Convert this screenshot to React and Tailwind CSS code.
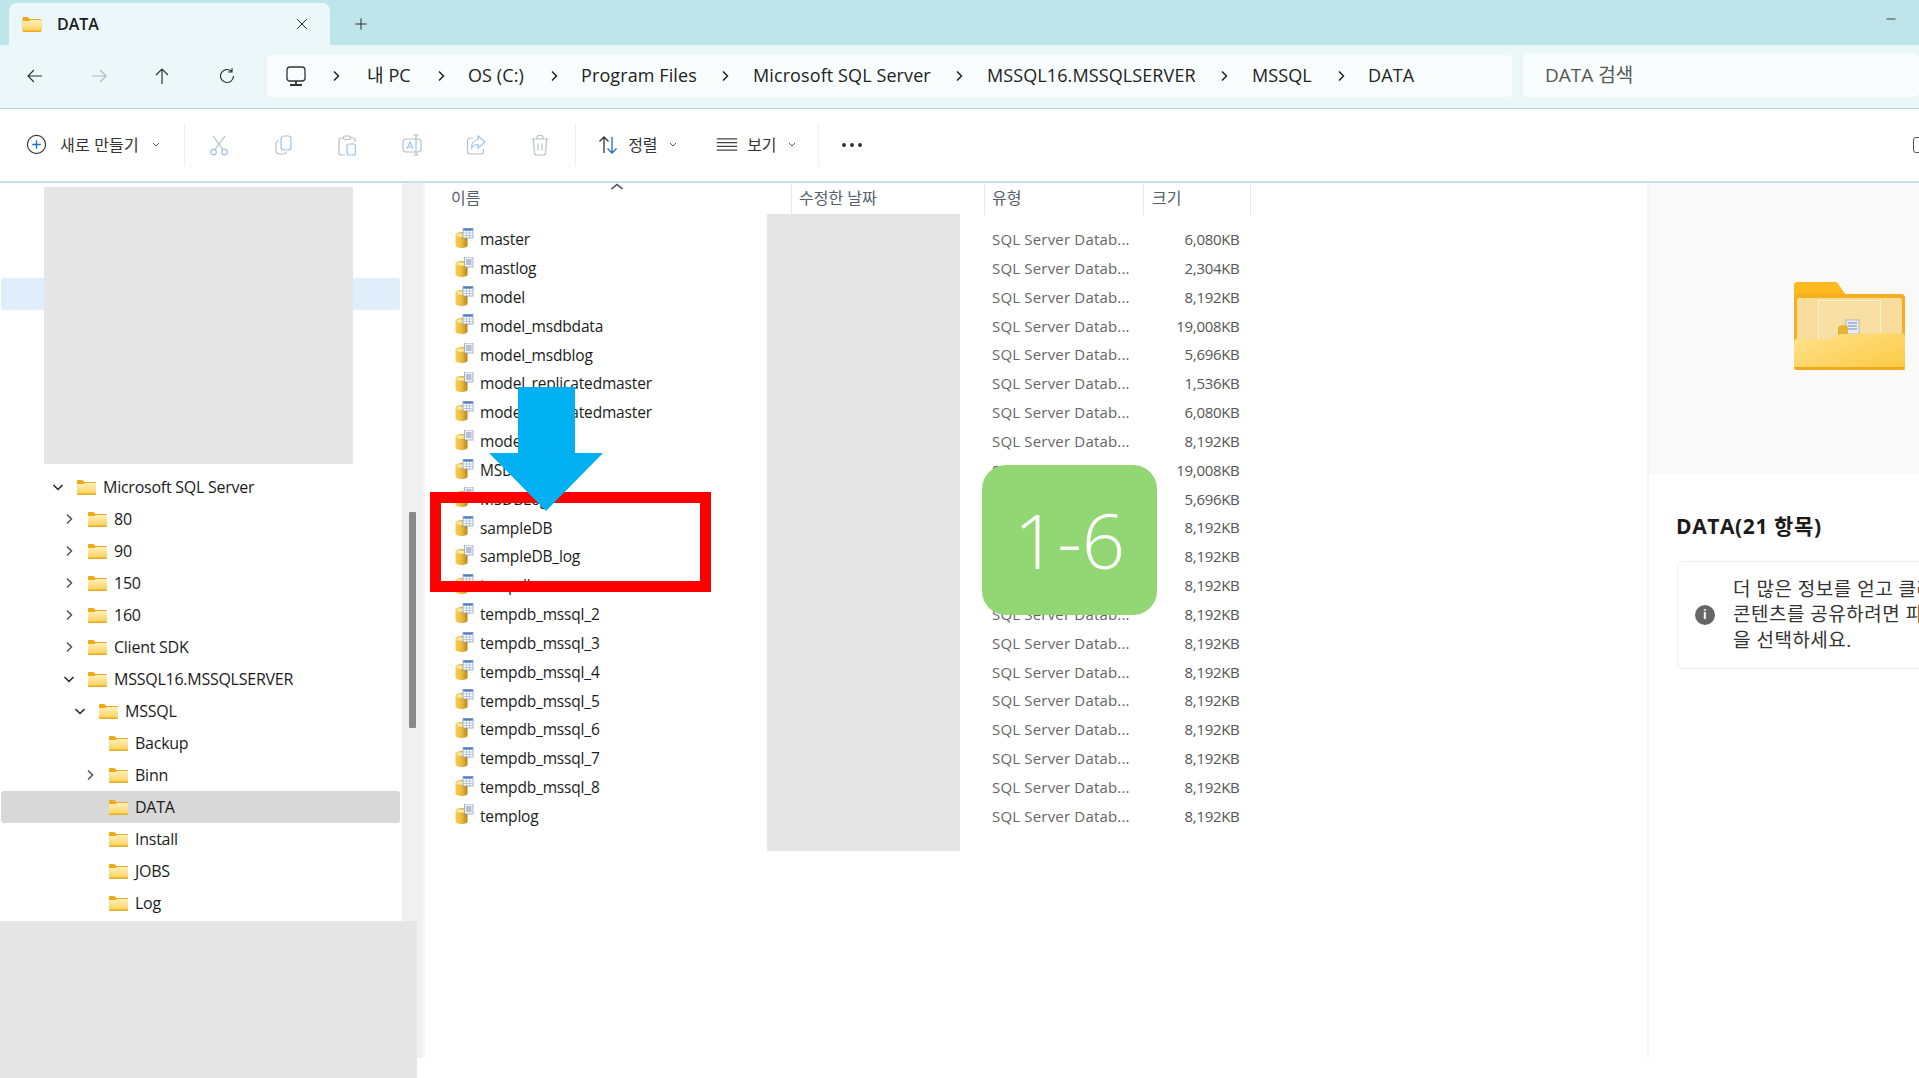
import { Minus, Plus, X } from "lucide-react";

const SANS = "[font-family:'Open_Sans','Noto_Sans_CJK_KR',sans-serif]";

const crumbs = [
  { label: "내 PC", cls: "w-[46px]", gap: "w-[55px]" },
  { label: "OS (C:)", cls: "w-[58px]", gap: "w-[55px]" },
  { label: "Program Files", cls: "w-[115px]", gap: "w-[57px]" },
  { label: "Microsoft SQL Server", cls: "w-[178px]", gap: "w-[56px]" },
  { label: "MSSQL16.MSSQLSERVER", cls: "w-[209px]", gap: "w-[56px]" },
  { label: "MSSQL", cls: "w-[61px]", gap: "w-[55px]" },
  { label: "DATA", cls: "w-[60px]", gap: "" },
];

const tree = [
  { name: "Microsoft SQL Server", indent: "pl-[51px]", arrow: "down" },
  { name: "80", indent: "pl-[62px]", arrow: "right" },
  { name: "90", indent: "pl-[62px]", arrow: "right" },
  { name: "150", indent: "pl-[62px]", arrow: "right" },
  { name: "160", indent: "pl-[62px]", arrow: "right" },
  { name: "Client SDK", indent: "pl-[62px]", arrow: "right" },
  { name: "MSSQL16.MSSQLSERVER", indent: "pl-[62px]", arrow: "down" },
  { name: "MSSQL", indent: "pl-[73px]", arrow: "down" },
  { name: "Backup", indent: "pl-[83px]" },
  { name: "Binn", indent: "pl-[83px]", arrow: "right" },
  { name: "DATA", indent: "pl-[83px]", selected: true },
  { name: "Install", indent: "pl-[83px]" },
  { name: "JOBS", indent: "pl-[83px]" },
  { name: "Log", indent: "pl-[83px]" },
];

const files = [
  ["master", "data", "6,080KB"],
  ["mastlog", "log", "2,304KB"],
  ["model", "data", "8,192KB"],
  ["model_msdbdata", "data", "19,008KB"],
  ["model_msdblog", "log", "5,696KB"],
  ["model_replicatedmaster", "log", "1,536KB"],
  ["model_replicatedmaster", "data", "6,080KB"],
  ["modellog", "log", "8,192KB"],
  ["MSDBData", "data", "19,008KB"],
  ["MSDBLog", "log", "5,696KB"],
  ["sampleDB", "data", "8,192KB"],
  ["sampleDB_log", "log", "8,192KB"],
  ["tempdb", "data", "8,192KB"],
  ["tempdb_mssql_2", "data", "8,192KB"],
  ["tempdb_mssql_3", "data", "8,192KB"],
  ["tempdb_mssql_4", "data", "8,192KB"],
  ["tempdb_mssql_5", "data", "8,192KB"],
  ["tempdb_mssql_6", "data", "8,192KB"],
  ["tempdb_mssql_7", "data", "8,192KB"],
  ["tempdb_mssql_8", "data", "8,192KB"],
  ["templog", "log", "8,192KB"],
];

const Folder = ({ className }) => (
  <svg viewBox="0 0 19 15" className={className}>
    <defs>
      <linearGradient id="folderFace" x1="0" y1="0" x2="0" y2="1">
        <stop offset="0" stopColor="#fff0bd" />
        <stop offset="1" stopColor="#fbd35f" />
      </linearGradient>
    </defs>
    <path d="M0 1a1 1 0 0 1 1-1h4.500l1.800 2H18a1 1 0 0 1 1 1v11a1 1 0 0 1-1 1H1a1 1 0 0 1-1-1z" fill="#eeaa1e" />
    <path d="M0 4l6.500 0 1.500-1H19v10.500H0z" fill="url(#folderFace)" />
  </svg>
);

const BigFolder = () => (
  <svg viewBox="0 0 111 88" className="h-[88px] w-[111px]">
    <defs>
      <linearGradient id="bigFace" x1="0" y1="0" x2="1" y2="1">
        <stop offset="0" stopColor="#ffe28f" />
        <stop offset="1" stopColor="#fcc93f" />
      </linearGradient>
    </defs>
    <path d="M0 4a4 4 0 0 1 4-4h36a5 5 0 0 1 4 2l7 10h56a4 4 0 0 1 4 4v68a4 4 0 0 1-4 4H4a4 4 0 0 1-4-4z" fill="#f5b021" />
    <path d="M0 4a4 4 0 0 1 4-4h36a5 5 0 0 1 4 2l7 10H0z" fill="#fdb91d" />
    <rect x="3" y="16" width="105" height="50" rx="2" fill="#f8dc9b" />
    <rect x="24.500" y="18.500" width="62" height="48" fill="#f8dfa4" stroke="#fdf0cf" strokeWidth="1" />
    <rect x="52" y="38" width="13" height="14" fill="#e9eef7" stroke="#8d97b0" strokeWidth="0.600" />
    <path d="M54 41h9M54 44h9M54 47h9" stroke="#6f8cc4" strokeWidth="1.200" />
    <path d="M44 46c0-2 3-3 6-3s4 1 4 3v10H44z" fill="#e6b531" />
    <path d="M0 60a3 3 0 0 1 3-3h33c3 0 4-1.500 6-3 2-1 3-2 6-2l59-1a4 4 0 0 1 4 4v31a4 4 0 0 1-4 4H4a4 4 0 0 1-4-4z" fill="url(#bigFace)" />
    <path d="M0 85h111a4 4 0 0 1-4 3H4a4 4 0 0 1-4-3z" fill="#eeaa1e" />
  </svg>
);

const DbIcon = ({ kind }) => (
  <svg viewBox="0 0 18 20" className="mb-[4px] h-[20px] w-[19px] shrink-0">
    <defs>
      <linearGradient id="dbBody" x1="0" y1="0" x2="1" y2="0">
        <stop offset="0" stopColor="#f4cf55" />
        <stop offset="0.55" stopColor="#e9b93a" />
        <stop offset="1" stopColor="#b9821c" />
      </linearGradient>
    </defs>
    <path d="M0 7c0-1.600 2.500-3 6-3s6 1.400 6 3v10.500c0 1.500-2.500 2.500-6 2.500s-6-1-6-2.500z" fill="url(#dbBody)" />
    <ellipse cx="5.500" cy="7" rx="4.500" ry="1.800" fill="#f9e6a0" />
    {kind === "data" ? (
      <g>
        <rect x="7.500" y="0" width="10" height="10" fill="#ffffff" stroke="#7d8fb5" strokeWidth="0.700" />
        <rect x="7.800" y="0.300" width="9.500" height="2.400" fill="#4f7fc4" />
        <path d="M8 5h9M8 7.500h9M11 3v7M14 3v7" stroke="#a9bbd8" strokeWidth="0.800" />
      </g>
    ) : (
      <g>
        <rect x="9" y="0" width="8.500" height="10" fill="#eef1f8" stroke="#8d97b0" strokeWidth="0.700" />
        <path d="M10.500 3h5.500M10.500 5h5.500M10.500 7h5.500" stroke="#7f90b8" strokeWidth="1" />
      </g>
    )}
  </svg>
);

const Chevron = ({ dir, className }) => (
  <svg viewBox="0 0 12 12" className={className} fill="none" stroke="currentColor" strokeWidth="1.500">
    {dir === "down" ? <path d="M1.500 4l4.500 4.500L10.500 4" /> : <path d="M4 1.500L8.500 6 4 10.500" />}
  </svg>
);

const Arrow = ({ d, className }) => (
  <svg viewBox="0 0 20 20" className={className} fill="none" stroke="currentColor" strokeWidth="1.200">
    <path d={d} />
  </svg>
);

const ToolIcon = ({ children }) => (
  <div className="flex w-[64.200px] justify-center">
    <svg viewBox="0 0 24 24" className="h-[24px] w-[24px]" fill="none" strokeWidth="1.200">
      {children}
    </svg>
  </div>
);

const Caret = () => (
  <svg viewBox="0 0 8 5" className="h-[5px] w-[8px] text-[#555555]" fill="none" stroke="currentColor">
    <path d="M1 1l3 3 3-3" />
  </svg>
);

export default function App() {
  return (
    <div className={`relative flex h-[1078px] w-[1919px] flex-col overflow-hidden bg-white text-[#1b1b1b] ${SANS}`}>
      {/* title bar */}
      <div className="flex h-[45px] shrink-0 items-stretch bg-[#bde5ea] pl-[9px] pt-[3px]">
        <div className="flex w-[321px] items-center rounded-t-[8px] bg-[#ecf7f9] pl-[13px]">
          <Folder className="h-[15px] w-[20px]" />
          <span className="ml-[15px] w-[236px] text-[16px] font-semibold">DATA</span>
          <X size={18} strokeWidth={1.3} className="text-[#222222]" />
        </div>
        <Plus size={18} strokeWidth={1.4} className="ml-[22px] mt-[12px] text-[#333333]" />
        <Minus size={14} strokeWidth={1.4} className="ml-auto mr-[21px] mt-[9px] text-[#222222]" />
      </div>

      {/* address row */}
      <div className="flex h-[64px] shrink-0 items-center border-b border-[#b5d5dd] bg-[#ecf7f9] pb-[2px]">
        <div className="flex w-[267px] items-center pl-[25px] text-[#333333]">
          <Arrow d="M17 10H3M9 4l-6 6 6 6" className="h-[20px] w-[20px]" />
          <Arrow d="M3 10h14M11 4l6 6-6 6" className="ml-[44px] h-[20px] w-[20px] text-[#b3b9bb]" />
          <Arrow d="M10 18V3M4 9l6-6 6 6" className="ml-[43px] h-[20px] w-[20px]" />
          <Arrow d="M16.500 10a6.500 6.500 0 1 1-2-4.700M15 2v4h-4" className="ml-[45px] h-[20px] w-[20px]" />
        </div>
        <div className="flex h-[42px] w-[1245px] items-center rounded-[5px] bg-[#f9fdfe] pl-[17px] text-[18px] tracking-[0.1px] text-[#222222]">
          <svg viewBox="0 0 24 24" className="h-[24px] w-[24px] shrink-0" fill="none" stroke="#333333" strokeWidth="1.300">
            <rect x="3" y="3" width="18" height="14" rx="3" />
            <path d="M12 17v3M6 21h12" strokeWidth="1.800" />
          </svg>
          <div className="flex w-[59px] shrink-0 justify-center pr-[3px]">
            <Chevron dir="right" className="h-[12px] w-[12px]" />
          </div>
          {crumbs.map((c) => (
            <div key={c.label} className="flex shrink-0 items-center">
              <span className={`${c.cls} whitespace-nowrap`}>{c.label}</span>
              {c.gap && (
                <div className={`flex ${c.gap} justify-center`}>
                  <Chevron dir="right" className="h-[12px] w-[12px]" />
                </div>
              )}
            </div>
          ))}
        </div>
        <div className="ml-[11px] flex h-[43px] flex-1 items-center rounded-[5px] bg-[#f9fdfe] pl-[22px] text-[19px] text-[#555555]">
          DATA 검색
        </div>
      </div>

      {/* toolbar */}
      <div className="flex h-[74px] shrink-0 items-center border-b-2 border-[#c9dfe6] pb-[1px] text-[16px] text-[#333333]">
        <svg viewBox="0 0 22 22" className="ml-[26px] h-[21px] w-[21px]" fill="none">
          <circle cx="11" cy="11" r="9.500" stroke="#333333" strokeWidth="1.200" />
          <path d="M11 6.500v9M6.500 11h9" stroke="#1c6fc4" strokeWidth="1.400" />
        </svg>
        <span className="ml-[13px] w-[92px] whitespace-nowrap tracking-[0.2px]">새로 만들기</span>
        <Caret />
        <div className="ml-[24px] h-[42px] w-px bg-[#eeeeee]" />
        <div className="ml-[2px] flex">
          <ToolIcon>
            <path d="M6 3l9.500 13M18 3L8.500 16" stroke="#b9bec2" />
            <circle cx="6.500" cy="19" r="2.800" stroke="#9cc3e8" />
            <circle cx="17.500" cy="19" r="2.800" stroke="#9cc3e8" />
          </ToolIcon>
          <ToolIcon>
            <rect x="10" y="3" width="10" height="14" rx="3" stroke="#9cc3e8" />
            <path d="M8 7.500A3 3 0 0 0 5 10.500v7a3.500 3.500 0 0 0 3.500 3.500h4a3 3 0 0 0 3-2.500" stroke="#b9bec2" />
          </ToolIcon>
          <ToolIcon>
            <path d="M8 5H6a2 2 0 0 0-2 2v13a2 2 0 0 0 2 2h4M16 5h2a2 2 0 0 1 2 2v2" stroke="#b9bec2" />
            <rect x="8.500" y="3" width="7" height="3.500" rx="1.500" stroke="#b9bec2" />
            <rect x="12" y="11" width="8.500" height="11" rx="2" stroke="#9cc3e8" />
          </ToolIcon>
          <ToolIcon>
            <rect x="3" y="6" width="18" height="13" rx="3" stroke="#b9bec2" />
            <path d="M7 16l3-7 3 7M8 14h4" stroke="#9cc3e8" />
            <path d="M16 2v20M13.500 2h5M13.500 22h5" stroke="#9cc3e8" />
          </ToolIcon>
          <ToolIcon>
            <path d="M9 5H6a2.500 2.500 0 0 0-2.500 2.500v11A2.500 2.500 0 0 0 6 21h11a2.500 2.500 0 0 0 2.500-2.500V16" stroke="#b9bec2" />
            <path d="M14 3l7 6-7 6v-3.500c-3 0-5 1-6.500 3.500 0-4.500 2.500-8 6.500-8.500z" stroke="#9cc3e8" />
          </ToolIcon>
          <ToolIcon>
            <path d="M3.500 6h17M9 6V4a1.500 1.500 0 0 1 1.500-1.500h3A1.500 1.500 0 0 1 15 4v2M5.500 6l1 14a2 2 0 0 0 2 2h7a2 2 0 0 0 2-2l1-14M10 10.500v7M14 10.500v7" stroke="#b9bec2" />
          </ToolIcon>
        </div>
        <div className="ml-[3px] h-[42px] w-px bg-[#eeeeee]" />
        <svg viewBox="0 0 22 22" className="ml-[21px] h-[22px] w-[22px]" fill="none" strokeWidth="1.300">
          <path d="M7 19V3M2.500 7.500L7 3l4.500 4.500" stroke="#333333" />
          <path d="M15 3v16M10.500 14.500L15 19l4.500-4.500" stroke="#1c6fc4" />
        </svg>
        <span className="ml-[9px] w-[41px] whitespace-nowrap">정렬</span>
        <Caret />
        <svg viewBox="0 0 22 14" className="ml-[39px] h-[13px] w-[22px]" stroke="#444444" strokeWidth="1.200">
          <path d="M0 1h22M0 5h22M0 9h22M0 13h22" />
        </svg>
        <span className="ml-[9px] w-[41px] whitespace-nowrap">보기</span>
        <Caret />
        <div className="ml-[22px] h-[42px] w-px bg-[#eeeeee]" />
        <div className="ml-[23px] flex gap-[4px]">
          <span className="h-[4px] w-[4px] rounded-full bg-[#333333]" />
          <span className="h-[4px] w-[4px] rounded-full bg-[#333333]" />
          <span className="h-[4px] w-[4px] rounded-full bg-[#333333]" />
        </div>
        <div className="ml-auto mr-[-6px] h-[16px] w-[12px] rounded-[3px] border border-[#555555]" />
      </div>

      {/* body */}
      <div className="relative flex min-h-0 flex-1">
        {/* nav pane */}
        <div className="flex w-[423px] shrink-0 items-start">
          <div className="w-[402px] text-[16px] tracking-[-0.25px]">
            <div className="h-[288px] pl-px pt-[95px]">
              <div className="h-[32px] w-[399px] rounded-[3px] bg-[#e0eefb]" />
            </div>
            {tree.map((row) => (
              <div
                key={row.name}
                className={`ml-px flex h-[32px] w-[399px] items-center rounded-[3px] ${row.indent} ${row.selected ? "bg-[#d8d8d8]" : ""}`}
              >
                <div className="flex h-[12px] w-[12px] shrink-0 justify-center text-[#555555]">
                  {row.arrow && <Chevron dir={row.arrow} className={row.arrow === "down" ? "h-[12px] w-[12px] text-[#222222]" : "h-[12px] w-[12px]"} />}
                </div>
                <Folder className="ml-[13px] h-[15px] w-[19px] shrink-0" />
                <span className="ml-[7px] whitespace-nowrap">{row.name}</span>
              </div>
            ))}
          </div>
          <div className="h-[875px] w-[21px] bg-[#f0f0f0] pl-[7px] pt-[329px]">
            <div className="h-[216px] w-[7px] rounded-[1px] bg-[#8a8a8a]" />
          </div>
        </div>

        {/* file list */}
        <div className="h-[875px] w-[1224px] shrink-0 border-l-2 border-[#f6f6f6] text-[15.500px]">
          <div className="relative flex h-[32px] text-[16px] text-[#56606a]">
            <span className="absolute left-[26px] top-[3px]">이름</span>
            <Chevron dir="down" className="absolute left-[186px] top-[-2px] h-[12px] w-[12px] rotate-180 scale-x-125 text-[#555555]" />
            <div className="ml-[366px] w-[193px] border-l border-[#e3e8ee] pl-[7px] pt-[3px]">수정한 날짜</div>
            <div className="w-[159px] border-l border-[#e3e8ee] pl-[7px] pt-[3px]">유형</div>
            <div className="w-[108px] border-x border-[#e3e8ee] pl-[8px] pt-[3px]">크기</div>
          </div>
          <div className="mt-[10.500px]">
            {files.map(([name, kind, size], i) => (
              <div key={i} className="flex h-[28.830px] items-center pl-[30px]">
                <DbIcon kind={kind} />
                <span className="ml-[6px] w-[512px] whitespace-nowrap tracking-[-0.17px]">{name}</span>
                <span className="mb-[1px] w-[138px] whitespace-nowrap text-[15px] tracking-[0.18px] text-[#666666]">SQL Server Datab...</span>
                <span className="mb-[1px] w-[109.500px] text-right text-[15px] tracking-[-0.3px] text-[#555555]">{size}</span>
              </div>
            ))}
          </div>
        </div>

        {/* preview pane */}
        <div className="h-[875px] flex-1 border-l-2 border-[#f4f4f4]">
          <div className="h-[291px] bg-[#f9f9f9] pl-[145px] pt-[99px]">
            <BigFolder />
          </div>
          <div className="pl-[27px] pt-[35px]">
            <h2 className="text-[21px] font-bold leading-[34px] tracking-[0.6px]">DATA(21 항목)</h2>
            <div className="ml-px mt-[18px] flex h-[108px] w-[400px] items-center rounded-[6px] border border-[#eeeeee] pl-[17px] text-[19px] leading-[25.500px] tracking-[0.5px] text-[#333333]">
              <div className="flex h-[20px] w-[20px] shrink-0 items-center justify-center rounded-full bg-[#666666] text-[12px] font-bold text-white">i</div>
              <p className="ml-[18px] whitespace-nowrap">
                더 많은 정보를 얻고 클라우드
                <br />
                콘텐츠를 공유하려면 파일
                <br />을 선택하세요.
              </p>
            </div>
          </div>
        </div>

        {/* redaction blocks and annotations sit on top of the window */}
        <div className="absolute left-[44px] top-[4px] h-[277px] w-[309px] bg-[#e6e6e6]" />
        <div className="absolute bottom-0 left-0 top-[738px] w-[417px] bg-[#e6e6e6]" />
        <div className="absolute left-[767px] top-[31px] h-[637px] w-[193px] bg-[#e5e5e5]" />
        <div className="absolute left-[430px] top-[309px] h-[100px] w-[281px] border-[11px] border-[#ff0000]" />
        <svg viewBox="0 0 114 124" className="absolute left-[489px] top-[204px] h-[124px] w-[114px]">
          <path d="M29 0h57v66h28L57 124 0 66h29z" fill="#00b0f0" />
        </svg>
        <div className="absolute left-[982px] top-[282px] flex h-[150px] w-[175px] items-center justify-center rounded-[24px] bg-[#92d774] text-[76px] font-light text-white [font-family:'Open_Sans',sans-serif]">
          1-6
        </div>
      </div>
    </div>
  );
}
